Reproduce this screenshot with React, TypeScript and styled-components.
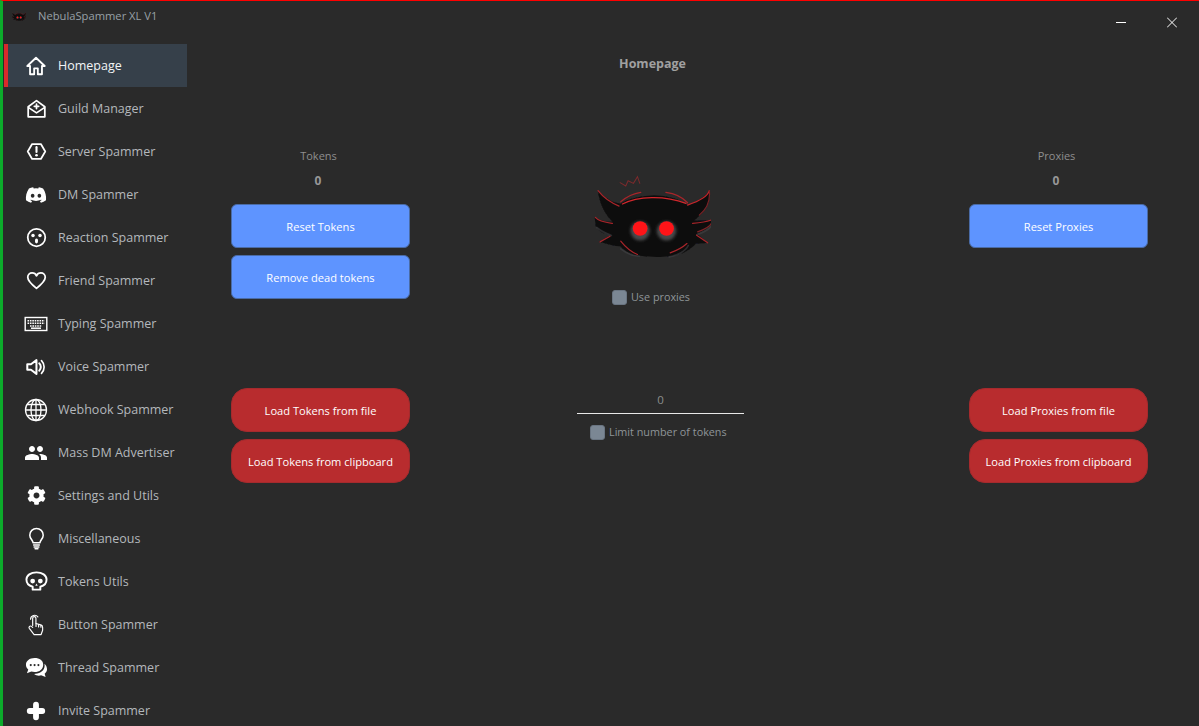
import React from "react";
import styled, { createGlobalStyle } from "styled-components";
import { FaDiscord, FaCog } from "react-icons/fa";
import { MdPeople } from "react-icons/md";

const Global = createGlobalStyle`
  html, body { margin: 0; height: 100%; overflow: hidden; background: #2a2a2a; }
  #root { height: 100%; }
  * { box-sizing: border-box; }
`;

const Window = styled.div`
  height: 726px;
  display: flex;
  flex-direction: column;
  background: #2a2a2a;
  border-top: 1px solid #ff0000;
  border-left: 3px solid #0cab2b;
  font-family: "Open Sans", "Noto Sans", sans-serif;
  overflow: hidden;
`;
const TitleBar = styled.header`
  height: 43px;
  flex: none;
  display: flex;
  padding-left: 9px;
`;
const AppName = styled.span`
  margin: 6px 0 0 12px;
  font-size: 11.2px;
  line-height: 18px;
  color: #98a0a6;
`;
const SmallLogo = styled.div`
  width: 14px;
  margin-top: 10px;
`;
const WindowButtons = styled.div`
  margin-left: auto;
  display: flex;
  padding-top: 15px;
  padding-right: 22px;
  gap: 41px;
`;
const Body = styled.div`
  flex: 1;
  display: flex;
  min-height: 0;
`;
const Nav = styled.nav`
  width: 184px;
  flex: none;
  padding-left: 1px;
  display: flex;
  flex-direction: column;
`;
const NavRow = styled.div<{ $active?: boolean }>`
  height: 43px;
  flex: none;
  display: flex;
  align-items: center;
  background: ${(p) => (p.$active ? "#36404a" : "transparent")};
  border-left: 4px solid ${(p) => (p.$active ? "#d92b2b" : "transparent")};
  color: ${(p) => (p.$active ? "#f2f4f6" : "#b4b8bc")};
  font-size: 12.5px;
`;
const NavIcon = styled.span`
  width: 24px;
  height: 24px;
  margin-left: 16px;
  margin-right: 10px;
  display: flex;
  align-items: center;
  justify-content: center;
  color: #fff;
  flex: none;
`;
const Main = styled.main`
  flex: 1;
  padding: 0 51px 0 44px;
  min-width: 0;
`;
const PageTitle = styled.h1`
  margin: 0;
  padding: 11px 0 0 0;
  height: 103px;
  font-size: 12.5px;
  line-height: 18px;
  font-weight: 700;
  color: #a0a0a0;
  text-align: center;
  width: 843px;
`;
const TopGrid = styled.div`
  display: grid;
  grid-template-columns: 179px 1fr 179px;
`;
const Side = styled.section`
  display: flex;
  flex-direction: column;
  align-items: stretch;
`;
const SideLabel = styled.div`
  height: 25px;
  font-size: 11px;
  line-height: 18px;
  color: #8e8e8e;
  text-align: center;
  padding-right: 4px;
`;
const Count = styled.div`
  height: 32px;
  font-size: 12px;
  line-height: 18px;
  font-weight: 700;
  color: #979797;
  text-align: center;
  padding-right: 5px;
`;
const Button = styled.button<{ $tone: "blue" | "red" }>`
  height: 44px;
  width: 179px;
  margin-bottom: 7px;
  font: inherit;
  font-size: 11.1px;
  color: #fff;
  border: 1px solid ${(p) => (p.$tone === "blue" ? "#4a6ba5" : "#a52a2d")};
  border-radius: ${(p) => (p.$tone === "blue" ? "6px" : "16px")};
  background: ${(p) => (p.$tone === "blue" ? "#5e94ff" : "#b82c2e")};
  padding: 0;
`;
const Center = styled.section`
  width: 482px;
  display: flex;
  flex-direction: column;
  align-items: center;
  padding-top: 28px;
`;
const BigLogo = styled.div`
  width: 117px;
  height: 83px;
  margin-left: 2px;
`;
const CheckRow = styled.label<{ $mt: number }>`
  display: flex;
  align-items: center;
  gap: 4px;
  margin-top: ${(p) => p.$mt}px;
  font-size: 10.8px;
  line-height: 16px;
  color: #8f9598;
`;
const Check = styled.span`
  width: 15px;
  height: 15px;
  border-radius: 3px;
  background: #7b8794;
  border: 1px solid #6a7582;
`;
const LoadGrid = styled.div`
  display: grid;
  grid-template-columns: 179px 1fr 179px;
  margin-top: 82px;
`;
const LimitCol = styled.section`
  width: 484px;
  display: flex;
  flex-direction: column;
  align-items: flex-start;
`;
const NumberField = styled.div`
  width: 167px;
  height: 26px;
  margin-left: 167px;
  border-bottom: 1px solid #e8e8e8;
  font-size: 11.5px;
  line-height: 24px;
  color: #8a8f8c;
  text-align: center;
`;
const LimitCheck = styled(CheckRow)`
  margin-left: 180px;
`;

const Logo = () => (
  <svg viewBox="70 45 350 249" width="100%" style={{ display: "block" }}>
    <defs>
      <filter id="logoHalo" x="-40%" y="-40%" width="180%" height="180%"><feGaussianBlur stdDeviation="5" /></filter>
      <filter id="logoSoft" x="-5%" y="-5%" width="110%" height="110%"><feGaussianBlur stdDeviation="1.4" /></filter>
    </defs>
    <path
      filter="url(#logoSoft)"
      d="M82 92 C100 112 125 128 150 130 C170 115 215 106 250 106 C290 106 325 116 350 135 C375 128 402 112 415 92 C420 125 405 155 370 180 C390 182 410 182 425 178 C425 198 405 208 378 220 C390 232 400 240 410 248 C395 250 385 250 375 250 C360 268 335 284 300 288 C270 291 232 291 200 286 C175 280 160 270 148 258 C130 258 118 254 105 250 L85 245 L120 225 C100 222 82 212 75 198 L72 172 C90 182 108 186 125 185 C105 165 85 130 82 92 Z"
      fill="#0d0d0e"
    />
    <g fill="none" stroke="#46464a" strokeWidth="5" strokeLinecap="round" opacity="0.55">
      <path d="M150 266 C175 286 195 288 205 288" />
      <path d="M295 290 C320 286 345 272 352 256" />
      <path d="M78 202 C95 216 112 222 122 226" />
      <path d="M378 224 C395 218 415 208 422 196" />
    </g>
    <g fill="none" stroke="#a9252a" strokeWidth="3.6" strokeLinecap="round">
      <path d="M82 92 C100 115 125 130 145 138" />
      <path d="M415 92 C410 110 380 125 350 135" stroke="#c8262b" />
      <path d="M415 92 C418 120 410 145 385 165" stroke="#7c2226" />
      <path d="M155 132 C200 108 280 105 345 130" stroke="#d2272c" />
      <path d="M150 125 C170 108 190 100 210 97" />
      <path d="M285 97 C310 100 335 112 350 128" />
      <path d="M74 172 C85 185 110 188 125 190" />
      <path d="M425 178 C410 185 385 188 365 190" />
      <path d="M423 180 C425 195 410 205 380 215" stroke="#7c2226" />
      <path d="M88 245 L118 228" />
      <path d="M377 225 L410 248" />
      <path d="M150 243 C165 262 180 275 200 283" />
      <path d="M298 278 C320 270 335 262 348 250" />
      <path d="M148 68 L165 78 L172 62 L188 70 L200 50 L207 70" stroke="#7c2a2c" strokeWidth="3" />
    </g>
    <circle cx="208" cy="212" r="29" fill="#4a4a4c" filter="url(#logoHalo)" />
    <circle cx="287" cy="212" r="29" fill="#4a4a4c" filter="url(#logoHalo)" />
    <circle cx="208" cy="205" r="22" fill="#ff1418" />
    <circle cx="287" cy="205" r="22" fill="#ff1418" />
  </svg>
);

const S = { fill: "none", stroke: "currentColor", strokeWidth: 2, strokeLinejoin: "round" as const, strokeLinecap: "round" as const };
const Svg: React.FC<{ size?: number; children: React.ReactNode }> = ({ size = 21, children }) => (
  <svg viewBox="0 0 24 24" width={size} height={size}>{children}</svg>
);

const icons: Record<string, React.ReactNode> = {
  home: <Svg size={22}><path {...S} d="M12 3 L2.5 12 H5.5 V21 H10 V14.5 H14 V21 H18.5 V12 H21.5 Z" /></Svg>,
  guild: <Svg><path {...S} d="M2.5 10 L12 3 L21.5 10 V21.5 H2.5 Z" /><path {...S} d="M3 11 L12 17 L21 11" /><path {...S} d="M12 7v5 M9.5 9.5h5" /></Svg>,
  server: <Svg><path {...S} d="M7 3.5h10l5 8.5-5 8.5H7L2 12z" /><path {...S} strokeWidth={2.4} d="M12 7v5.5" /><circle cx="12" cy="16.3" r="1.5" fill="currentColor" /></Svg>,
  discord: <FaDiscord size={22} />,
  reaction: <Svg><circle {...S} cx="12" cy="12" r="10" /><circle cx="8" cy="9.8" r="2" fill="currentColor" /><circle cx="16" cy="9.8" r="2" fill="currentColor" /><ellipse cx="12" cy="16" rx="1.8" ry="2.8" fill="currentColor" /></Svg>,
  heart: <Svg><path {...S} d="M12 21 C5 15.5 2 12.4 2 8.4 C2 5.4 4.3 3.4 7 3.4 C9 3.4 11 4.4 12 6.6 C13 4.4 15 3.4 17 3.4 C19.7 3.4 22 5.4 22 8.4 C22 12.4 19 15.5 12 21 Z" /></Svg>,
  keyboard: <Svg size={24}><rect x="1.2" y="5.5" width="21.6" height="13" fill="none" stroke="currentColor" strokeWidth="1.4" /><g stroke="currentColor" strokeWidth="1.5" strokeDasharray="1.6 .8"><path d="M3.5 8.7h17M3.5 11.2h17" /><path d="M6 14h12" /><path d="M7 16.2h10" strokeDasharray="none" /></g></Svg>,
  voice: <Svg size={22}><path {...S} strokeWidth={2.2} d="M2.5 9h4L12.5 4.5v15L6.5 15h-4z" /><path {...S} strokeWidth={2.2} d="M15.5 8a5.5 5.5 0 0 1 0 8" /><path {...S} strokeWidth={1.8} d="M18 5a10 10 0 0 1 0 14" /></Svg>,
  globe: <Svg size={24}><g fill="none" stroke="currentColor" strokeWidth="1.3"><circle cx="12" cy="12" r="10.5" /><ellipse cx="12" cy="12" rx="5" ry="10.5" /><path d="M12 1.5v21M1.5 12h21M3.2 6.5h17.6M3.2 17.5h17.6" /></g></Svg>,
  people: <MdPeople size={24} />,
  cog: <FaCog size={19} />,
  bulb: <Svg size={23}><path {...S} strokeWidth={1.6} d="M8.5 16.5 C8 13.5 5 12 5 8.5 A7 7 0 0 1 19 8.5 C19 12 16 13.5 15.5 16.5 Z" /><path {...S} strokeWidth={1.5} d="M9 18.7h6M9.5 20.8h5M10.5 22.7h3" /></Svg>,
  skull: <Svg size={23}><path {...S} d="M8 20.5 V17.5 C4 16.5 1.5 14 1.5 10 C1.5 5.5 6 2.5 12 2.5 C18 2.5 22.5 5.5 22.5 10 C22.5 14 20 16.5 16 17.5 V20.5 Z" /><circle cx="8" cy="11.5" r="2.5" fill="currentColor" /><circle cx="16" cy="11.5" r="2.5" fill="currentColor" /><path d="M12 14l1.3 2.5h-2.6z" fill="currentColor" /></Svg>,
  hand: <Svg size={23}><g fill="none" stroke="currentColor" strokeWidth="1.2" strokeLinejoin="round" strokeLinecap="round"><path d="M8 13V5.5a1.7 1.7 0 0 1 3.4 0V11l5 1.4c1.3.3 2 1.3 2 2.6v3l-1.6 4.5H9.5L4.5 16c-1-1.5.8-3.2 2.2-2L8 15" /><path d="M5.8 6.5a4.2 4.2 0 0 1 7.6-2.4" /><path d="M11.5 11v3M14.2 12v2.5M16.6 12.6v2.2" /></g></Svg>,
  thread: <Svg size={23}><path d="M10 2C4.8 2 1 5 1 9c0 2 1 3.7 2.4 5L2 18l4.6-1.8c1 .3 2.2.5 3.4.5 5.2 0 9-3.2 9-7.7S15.2 2 10 2z" fill="currentColor" /><path d="M20.2 8c.2.6.3 1.3.3 2 0 5-4.3 8.4-9.5 8.5L9.5 18.7c1.4 1.2 3.2 1.8 5 1.8.8 0 1.6-.1 2.3-.3L21.5 22l-1-3.5c1.5-1.2 2.5-2.9 2.5-4.7 0-2.4-1.2-4.6-2.8-5.8z" fill="currentColor" /><g fill="#2a2a2a"><circle cx="6" cy="9.5" r="1.1" /><circle cx="10" cy="9.5" r="1.1" /><circle cx="14" cy="9.5" r="1.1" /></g></Svg>,
  plus: <Svg size={20}><path d="M12 4.5v15M4.5 12h15" stroke="currentColor" strokeWidth="7" strokeLinecap="round" fill="none" /></Svg>,
};

const navItems: [string, string][] = [
  ["home", "Homepage"], ["guild", "Guild Manager"], ["server", "Server Spammer"], ["discord", "DM Spammer"],
  ["reaction", "Reaction Spammer"], ["heart", "Friend Spammer"], ["keyboard", "Typing Spammer"], ["voice", "Voice Spammer"],
  ["globe", "Webhook Spammer"], ["people", "Mass DM Advertiser"], ["cog", "Settings and Utils"], ["bulb", "Miscellaneous"],
  ["skull", "Tokens Utils"], ["hand", "Button Spammer"], ["thread", "Thread Spammer"], ["plus", "Invite Spammer"],
];

export default function App() {
  return (
    <Window>
      <Global />
      <TitleBar>
        <SmallLogo><Logo /></SmallLogo>
        <AppName>NebulaSpammer XL V1</AppName>
        <WindowButtons>
          <svg width="10" height="14" viewBox="0 0 10 14"><path d="M0 6.5h10" stroke="#fff" strokeWidth="1" /></svg>
          <svg width="10" height="14" viewBox="0 0 10 14"><path d="M0 1.5l10 10M10 1.5l-10 10" stroke="#fff" strokeWidth="1" /></svg>
        </WindowButtons>
      </TitleBar>
      <Body>
        <Nav>
          {navItems.map(([icon, label], i) => (
            <NavRow key={label} $active={i === 0}>
              <NavIcon>{icons[icon]}</NavIcon>
              {label}
            </NavRow>
          ))}
        </Nav>
        <Main>
          <PageTitle>Homepage</PageTitle>
          <TopGrid>
            <Side>
              <SideLabel>Tokens</SideLabel>
              <Count>0</Count>
              <Button $tone="blue">Reset Tokens</Button>
              <Button $tone="blue">Remove dead tokens</Button>
            </Side>
            <Center>
              <BigLogo><Logo /></BigLogo>
              <CheckRow $mt={31}><Check />Use proxies</CheckRow>
            </Center>
            <Side>
              <SideLabel>Proxies</SideLabel>
              <Count>0</Count>
              <Button $tone="blue">Reset Proxies</Button>
            </Side>
          </TopGrid>
          <LoadGrid>
            <Side>
              <Button $tone="red">Load Tokens from file</Button>
              <Button $tone="red">Load Tokens from clipboard</Button>
            </Side>
            <LimitCol>
              <NumberField>0</NumberField>
              <LimitCheck $mt={10}><Check />Limit number of tokens</LimitCheck>
            </LimitCol>
            <Side>
              <Button $tone="red">Load Proxies from file</Button>
              <Button $tone="red">Load Proxies from clipboard</Button>
            </Side>
          </LoadGrid>
        </Main>
      </Body>
    </Window>
  );
}
